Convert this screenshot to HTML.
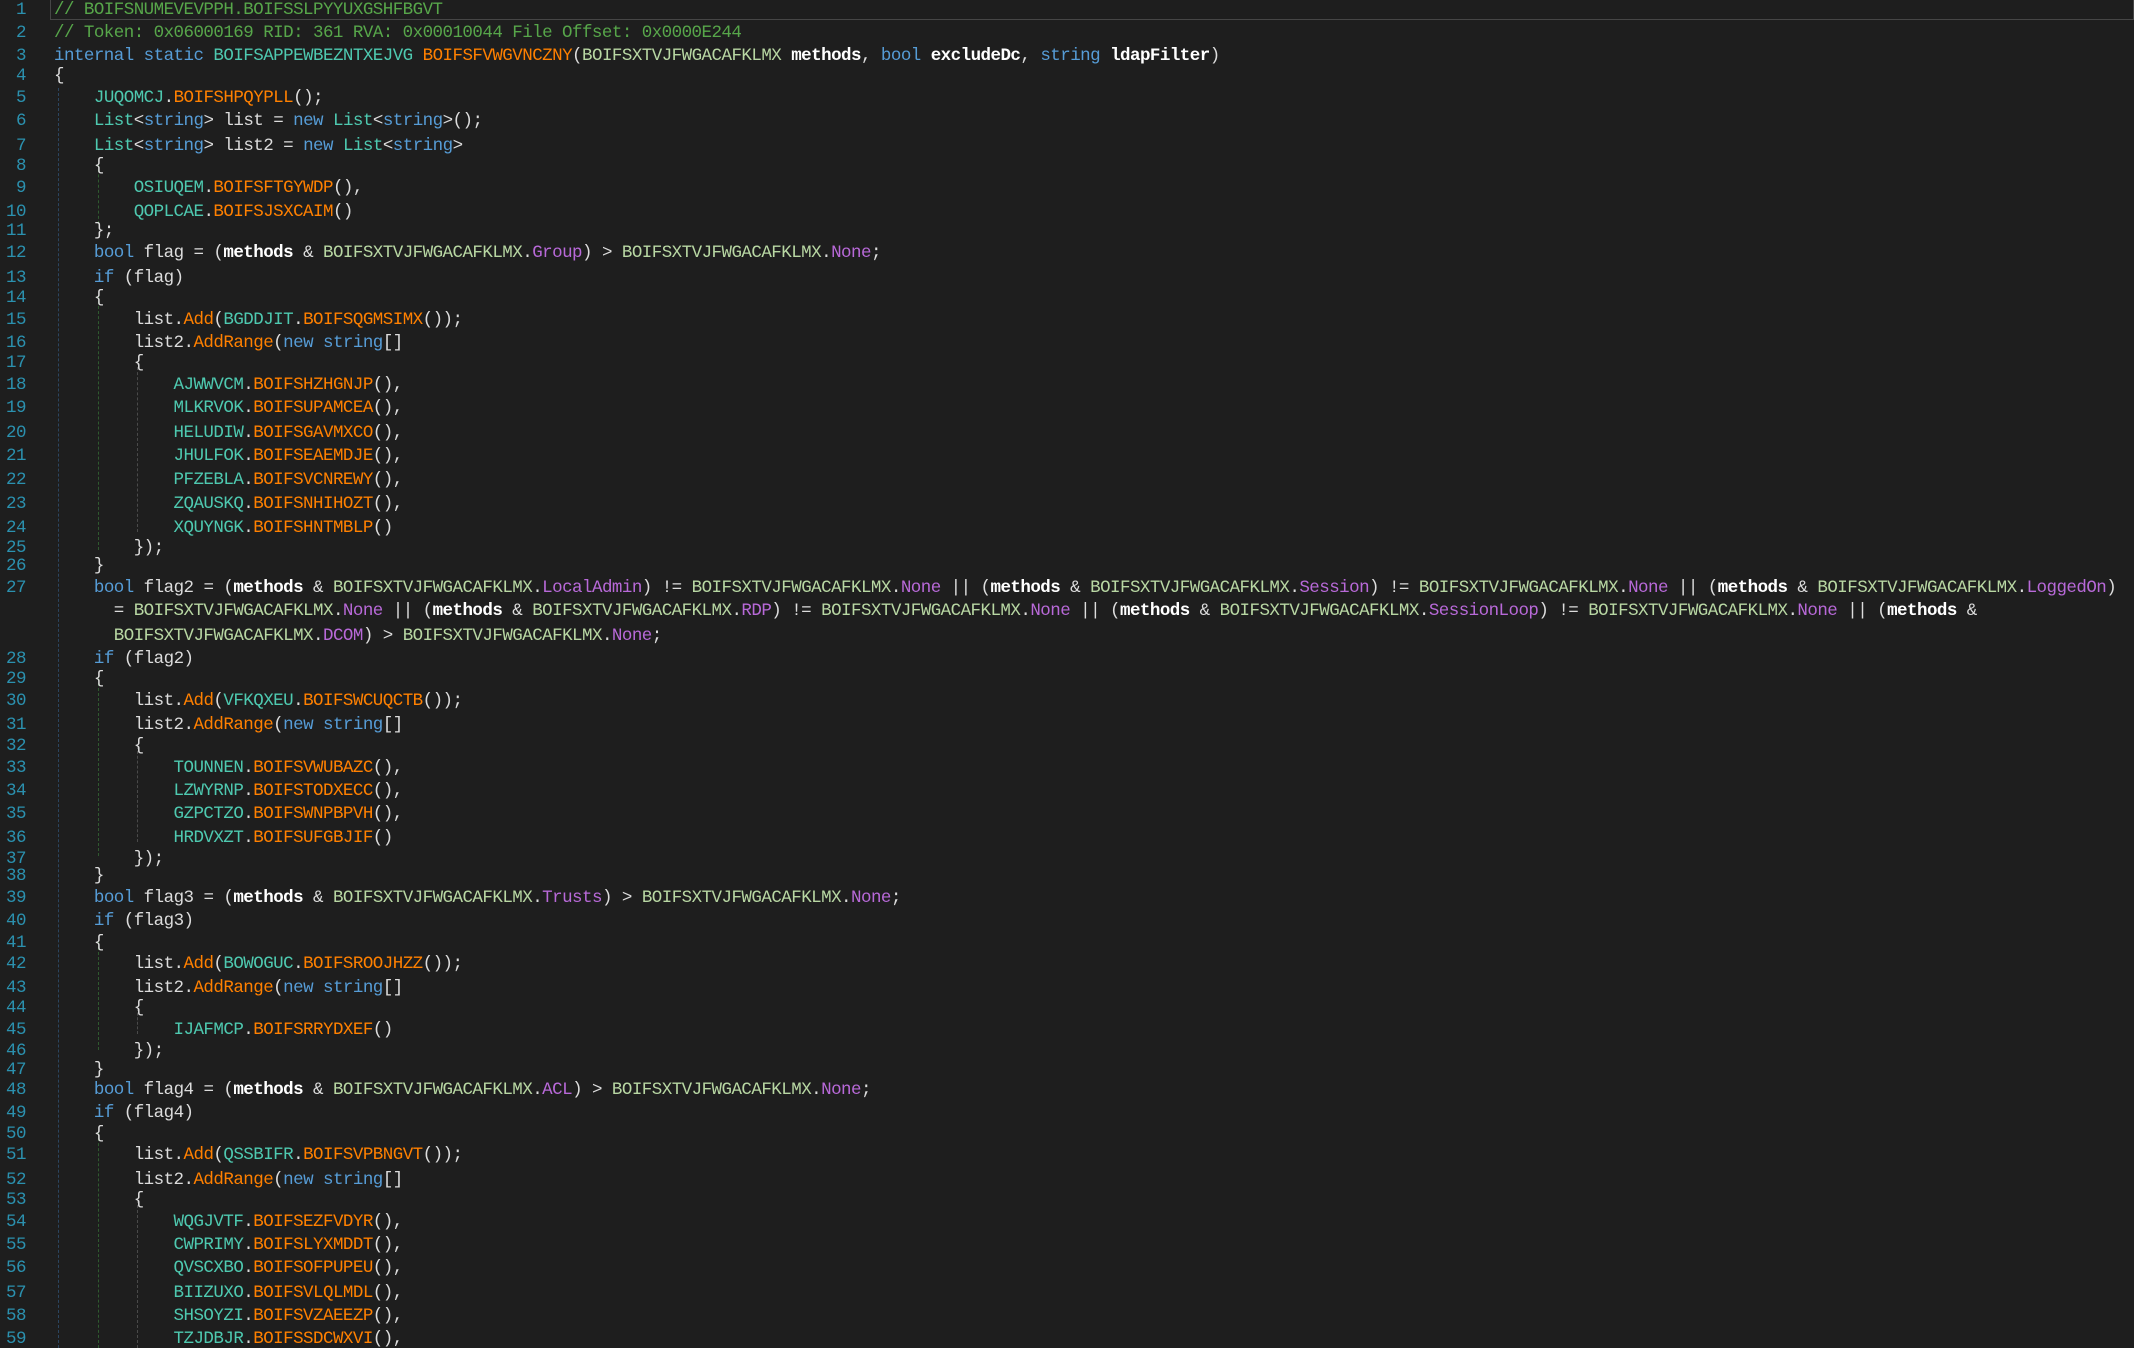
<!DOCTYPE html>
<html><head><meta charset="utf-8"><style>
html,body{margin:0;padding:0;background:#1e1e1e;width:2134px;height:1348px;overflow:hidden;}
body{position:relative;font-family:"Liberation Mono",monospace;font-size:17.5px;letter-spacing:-0.54px;color:#dcdcdc;}
.l{position:absolute;left:54px;height:22px;line-height:22px;white-space:pre;}
.n{position:absolute;left:0;width:26px;text-align:right;height:22px;line-height:22px;color:#2b91af;letter-spacing:-0.5px;}
.k{color:#569cd6}.t{color:#4ec9b0}.m{color:#ff8000}.e{color:#b8d7a3}.f{color:#b869d8}.p{color:#fff;font-weight:bold}.c{color:#57a64a}
.g{position:absolute;width:0;border-left:1px dashed #2b4560;}
.g2{border-left-color:#2f5a2f}.g3{border-left-color:#4a4a4a}
#hl{position:absolute;left:50px;top:0;right:0;height:19px;border:1px solid #464646;border-top:none;}
</style></head><body>
<div id="hl"></div>
<div class="g" style="left:58px;top:88px;height:1260px"></div>
<div class="g g2" style="left:98px;top:164px;height:60px"></div>
<div class="g g2" style="left:98px;top:296px;height:254px"></div>
<div class="g g3" style="left:137px;top:362px;height:170px"></div>
<div class="g g2" style="left:98px;top:678px;height:178px"></div>
<div class="g g3" style="left:137px;top:746px;height:96px"></div>
<div class="g g2" style="left:98px;top:942px;height:108px"></div>
<div class="g g3" style="left:137px;top:1008px;height:26px"></div>
<div class="g g2" style="left:98px;top:1133px;height:215px"></div>
<div class="g g3" style="left:137px;top:1200px;height:148px"></div>

<div class="n" style="top:-1px">1</div><div class="l c" style="top:-1px">// BOIFSNUMEVEVPPH.BOIFSSLPYYUXGSHFBGVT</div>
<div class="n" style="top:22px">2</div><div class="l c" style="top:22px">// Token: 0x06000169 RID: 361 RVA: 0x00010044 File Offset: 0x0000E244</div>
<div class="n" style="top:45px">3</div><div class="l" style="top:45px"><span class="k">internal static</span> <span class="t">BOIFSAPPEWBEZNTXEJVG</span> <span class="m">BOIFSFVWGVNCZNY</span>(<span class="e">BOIFSXTVJFWGACAFKLMX</span> <span class="p">methods</span>, <span class="k">bool</span> <span class="p">excludeDc</span>, <span class="k">string</span> <span class="p">ldapFilter</span>)</div>
<div class="n" style="top:65px">4</div><div class="l" style="top:65px">{</div>
<div class="n" style="top:87px">5</div><div class="l" style="top:87px">    <span class="t">JUQOMCJ</span>.<span class="m">BOIFSHPQYPLL</span>();</div>
<div class="n" style="top:110px">6</div><div class="l" style="top:110px">    <span class="t">List</span>&lt;<span class="k">string</span>&gt; list = <span class="k">new</span> <span class="t">List</span>&lt;<span class="k">string</span>&gt;();</div>
<div class="n" style="top:135px">7</div><div class="l" style="top:135px">    <span class="t">List</span>&lt;<span class="k">string</span>&gt; list2 = <span class="k">new</span> <span class="t">List</span>&lt;<span class="k">string</span>&gt;</div>
<div class="n" style="top:155px">8</div><div class="l" style="top:155px">    {</div>
<div class="n" style="top:177px">9</div><div class="l" style="top:177px">        <span class="t">OSIUQEM</span>.<span class="m">BOIFSFTGYWDP</span>(),</div>
<div class="n" style="top:201px">10</div><div class="l" style="top:201px">        <span class="t">QOPLCAE</span>.<span class="m">BOIFSJSXCAIM</span>()</div>
<div class="n" style="top:220px">11</div><div class="l" style="top:220px">    };</div>
<div class="n" style="top:242px">12</div><div class="l" style="top:242px">    <span class="k">bool</span> flag = (<span class="p">methods</span> &amp; <span class="e">BOIFSXTVJFWGACAFKLMX</span>.<span class="f">Group</span>) &gt; <span class="e">BOIFSXTVJFWGACAFKLMX</span>.<span class="f">None</span>;</div>
<div class="n" style="top:267px">13</div><div class="l" style="top:267px">    <span class="k">if</span> (flag)</div>
<div class="n" style="top:287px">14</div><div class="l" style="top:287px">    {</div>
<div class="n" style="top:309px">15</div><div class="l" style="top:309px">        list.<span class="m">Add</span>(<span class="t">BGDDJIT</span>.<span class="m">BOIFSQGMSIMX</span>());</div>
<div class="n" style="top:332px">16</div><div class="l" style="top:332px">        list2.<span class="m">AddRange</span>(<span class="k">new string</span>[]</div>
<div class="n" style="top:352px">17</div><div class="l" style="top:352px">        {</div>
<div class="n" style="top:374px">18</div><div class="l" style="top:374px">            <span class="t">AJWWVCM</span>.<span class="m">BOIFSHZHGNJP</span>(),</div>
<div class="n" style="top:397px">19</div><div class="l" style="top:397px">            <span class="t">MLKRVOK</span>.<span class="m">BOIFSUPAMCEA</span>(),</div>
<div class="n" style="top:422px">20</div><div class="l" style="top:422px">            <span class="t">HELUDIW</span>.<span class="m">BOIFSGAVMXCO</span>(),</div>
<div class="n" style="top:445px">21</div><div class="l" style="top:445px">            <span class="t">JHULFOK</span>.<span class="m">BOIFSEAEMDJE</span>(),</div>
<div class="n" style="top:469px">22</div><div class="l" style="top:469px">            <span class="t">PFZEBLA</span>.<span class="m">BOIFSVCNREWY</span>(),</div>
<div class="n" style="top:493px">23</div><div class="l" style="top:493px">            <span class="t">ZQAUSKQ</span>.<span class="m">BOIFSNHIHOZT</span>(),</div>
<div class="n" style="top:517px">24</div><div class="l" style="top:517px">            <span class="t">XQUYNGK</span>.<span class="m">BOIFSHNTMBLP</span>()</div>
<div class="n" style="top:537px">25</div><div class="l" style="top:537px">        });</div>
<div class="n" style="top:555px">26</div><div class="l" style="top:555px">    }</div>
<div class="n" style="top:577px">27</div><div class="l" style="top:577px">    <span class="k">bool</span> flag2 = (<span class="p">methods</span> &amp; <span class="e">BOIFSXTVJFWGACAFKLMX</span>.<span class="f">LocalAdmin</span>) != <span class="e">BOIFSXTVJFWGACAFKLMX</span>.<span class="f">None</span> || (<span class="p">methods</span> &amp; <span class="e">BOIFSXTVJFWGACAFKLMX</span>.<span class="f">Session</span>) != <span class="e">BOIFSXTVJFWGACAFKLMX</span>.<span class="f">None</span> || (<span class="p">methods</span> &amp; <span class="e">BOIFSXTVJFWGACAFKLMX</span>.<span class="f">LoggedOn</span>)</div>
<div class="l" style="top:600px">      = <span class="e">BOIFSXTVJFWGACAFKLMX</span>.<span class="f">None</span> || (<span class="p">methods</span> &amp; <span class="e">BOIFSXTVJFWGACAFKLMX</span>.<span class="f">RDP</span>) != <span class="e">BOIFSXTVJFWGACAFKLMX</span>.<span class="f">None</span> || (<span class="p">methods</span> &amp; <span class="e">BOIFSXTVJFWGACAFKLMX</span>.<span class="f">SessionLoop</span>) != <span class="e">BOIFSXTVJFWGACAFKLMX</span>.<span class="f">None</span> || (<span class="p">methods</span> &amp;</div>
<div class="l" style="top:625px">      <span class="e">BOIFSXTVJFWGACAFKLMX</span>.<span class="f">DCOM</span>) &gt; <span class="e">BOIFSXTVJFWGACAFKLMX</span>.<span class="f">None</span>;</div>
<div class="n" style="top:648px">28</div><div class="l" style="top:648px">    <span class="k">if</span> (flag2)</div>
<div class="n" style="top:668px">29</div><div class="l" style="top:668px">    {</div>
<div class="n" style="top:690px">30</div><div class="l" style="top:690px">        list.<span class="m">Add</span>(<span class="t">VFKQXEU</span>.<span class="m">BOIFSWCUQCTB</span>());</div>
<div class="n" style="top:714px">31</div><div class="l" style="top:714px">        list2.<span class="m">AddRange</span>(<span class="k">new string</span>[]</div>
<div class="n" style="top:735px">32</div><div class="l" style="top:735px">        {</div>
<div class="n" style="top:757px">33</div><div class="l" style="top:757px">            <span class="t">TOUNNEN</span>.<span class="m">BOIFSVWUBAZC</span>(),</div>
<div class="n" style="top:780px">34</div><div class="l" style="top:780px">            <span class="t">LZWYRNP</span>.<span class="m">BOIFSTODXECC</span>(),</div>
<div class="n" style="top:803px">35</div><div class="l" style="top:803px">            <span class="t">GZPCTZO</span>.<span class="m">BOIFSWNPBPVH</span>(),</div>
<div class="n" style="top:827px">36</div><div class="l" style="top:827px">            <span class="t">HRDVXZT</span>.<span class="m">BOIFSUFGBJIF</span>()</div>
<div class="n" style="top:848px">37</div><div class="l" style="top:848px">        });</div>
<div class="n" style="top:865px">38</div><div class="l" style="top:865px">    }</div>
<div class="n" style="top:887px">39</div><div class="l" style="top:887px">    <span class="k">bool</span> flag3 = (<span class="p">methods</span> &amp; <span class="e">BOIFSXTVJFWGACAFKLMX</span>.<span class="f">Trusts</span>) &gt; <span class="e">BOIFSXTVJFWGACAFKLMX</span>.<span class="f">None</span>;</div>
<div class="n" style="top:910px">40</div><div class="l" style="top:910px">    <span class="k">if</span> (flag3)</div>
<div class="n" style="top:932px">41</div><div class="l" style="top:932px">    {</div>
<div class="n" style="top:953px">42</div><div class="l" style="top:953px">        list.<span class="m">Add</span>(<span class="t">BOWOGUC</span>.<span class="m">BOIFSROOJHZZ</span>());</div>
<div class="n" style="top:977px">43</div><div class="l" style="top:977px">        list2.<span class="m">AddRange</span>(<span class="k">new string</span>[]</div>
<div class="n" style="top:997px">44</div><div class="l" style="top:997px">        {</div>
<div class="n" style="top:1019px">45</div><div class="l" style="top:1019px">            <span class="t">IJAFMCP</span>.<span class="m">BOIFSRRYDXEF</span>()</div>
<div class="n" style="top:1040px">46</div><div class="l" style="top:1040px">        });</div>
<div class="n" style="top:1059px">47</div><div class="l" style="top:1059px">    }</div>
<div class="n" style="top:1079px">48</div><div class="l" style="top:1079px">    <span class="k">bool</span> flag4 = (<span class="p">methods</span> &amp; <span class="e">BOIFSXTVJFWGACAFKLMX</span>.<span class="f">ACL</span>) &gt; <span class="e">BOIFSXTVJFWGACAFKLMX</span>.<span class="f">None</span>;</div>
<div class="n" style="top:1102px">49</div><div class="l" style="top:1102px">    <span class="k">if</span> (flag4)</div>
<div class="n" style="top:1123px">50</div><div class="l" style="top:1123px">    {</div>
<div class="n" style="top:1144px">51</div><div class="l" style="top:1144px">        list.<span class="m">Add</span>(<span class="t">QSSBIFR</span>.<span class="m">BOIFSVPBNGVT</span>());</div>
<div class="n" style="top:1169px">52</div><div class="l" style="top:1169px">        list2.<span class="m">AddRange</span>(<span class="k">new string</span>[]</div>
<div class="n" style="top:1189px">53</div><div class="l" style="top:1189px">        {</div>
<div class="n" style="top:1211px">54</div><div class="l" style="top:1211px">            <span class="t">WQGJVTF</span>.<span class="m">BOIFSEZFVDYR</span>(),</div>
<div class="n" style="top:1234px">55</div><div class="l" style="top:1234px">            <span class="t">CWPRIMY</span>.<span class="m">BOIFSLYXMDDT</span>(),</div>
<div class="n" style="top:1257px">56</div><div class="l" style="top:1257px">            <span class="t">QVSCXBO</span>.<span class="m">BOIFSOFPUPEU</span>(),</div>
<div class="n" style="top:1282px">57</div><div class="l" style="top:1282px">            <span class="t">BIIZUXO</span>.<span class="m">BOIFSVLQLMDL</span>(),</div>
<div class="n" style="top:1305px">58</div><div class="l" style="top:1305px">            <span class="t">SHSOYZI</span>.<span class="m">BOIFSVZAEEZP</span>(),</div>
<div class="n" style="top:1328px">59</div><div class="l" style="top:1328px">            <span class="t">TZJDBJR</span>.<span class="m">BOIFSSDCWXVI</span>(),</div>
</body></html>
